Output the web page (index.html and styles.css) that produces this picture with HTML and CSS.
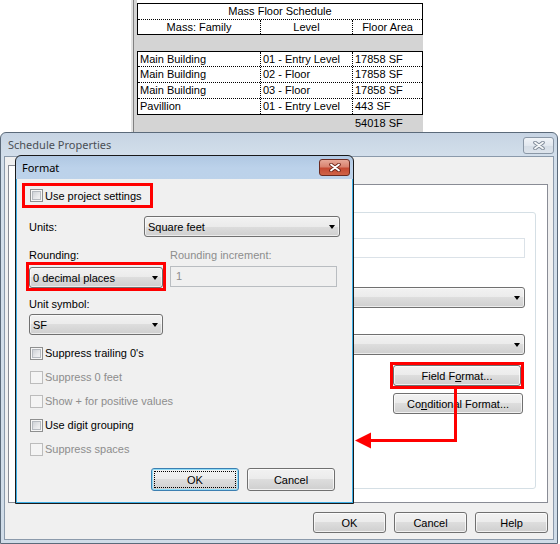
FILE: index.html
```html
<!DOCTYPE html>
<html lang="en">
<head>
    <meta charset="UTF-8">
    <title>Mass Floor Schedule</title>
    <link rel="stylesheet" href="styles.css">
</head>
<body>
    <!-- schedule view behind the dialogs -->
    <div class="schedule-view">
        <div class="splitter"></div>
        <div class="sheet">
            <div class="sched-head">
                <div class="sched-title">Mass Floor Schedule</div>
                <div class="sched-row head-row">
                    <div class="cell center">Mass: Family</div>
                    <div class="cell center">Level</div>
                    <div class="cell center">Floor Area</div>
                </div>
            </div>
            <div class="sched-gap"></div>
            <div class="sched-body">
                <div class="sched-row">
                    <div class="cell">Main Building</div>
                    <div class="cell">01 - Entry Level</div>
                    <div class="cell">17858 SF</div>
                </div>
                <div class="sched-row">
                    <div class="cell">Main Building</div>
                    <div class="cell">02 - Floor</div>
                    <div class="cell">17858 SF</div>
                </div>
                <div class="sched-row">
                    <div class="cell">Main Building</div>
                    <div class="cell">03 - Floor</div>
                    <div class="cell">17858 SF</div>
                </div>
                <div class="sched-row">
                    <div class="cell">Pavillion</div>
                    <div class="cell">01 - Entry Level</div>
                    <div class="cell">443 SF</div>
                </div>
            </div>
            <div class="sched-total">
                <div class="cell"></div>
                <div class="cell"></div>
                <div class="cell">54018 SF</div>
            </div>
        </div>
    </div>

    <!-- Schedule Properties window -->
    <div class="window props">
        <div class="titlebar">
            <span class="title">Schedule Properties</span>
            <span class="close-btn">
                <svg width="12" height="9" viewBox="0 0 12 9"><path d="M2 1.5 10 7.5M10 1.5 2 7.5" stroke="#7d8896" stroke-width="3.6" stroke-linecap="round"/><path d="M2 1.5 10 7.5M10 1.5 2 7.5" stroke="#f4f6f8" stroke-width="1.8" stroke-linecap="round"/></svg>
            </span>
        </div>
        <div class="client">
            <div class="tabs">
                <div class="tab"></div>
            </div>
            <div class="tab-panel">
                <div class="group">
                    <div class="textbox"></div>
                    <div class="combo wide"><span class="drop"></span></div>
                    <div class="combo wide second"><span class="drop"></span></div>
                    <div class="btn-col">
                        <div class="mark field-mark"><div class="btn field-btn">Field F<u>o</u>rmat...</div></div>
                        <div class="btn cond-btn">Co<u>n</u>ditional Format...</div>
                    </div>
                </div>
            </div>
            <div class="footer">
                <div class="btn foot-btn">OK</div>
                <div class="btn foot-btn">Cancel</div>
                <div class="btn foot-btn">Help</div>
            </div>
        </div>
    </div>

    <!-- Format dialog on top -->
    <div class="window format">
        <div class="titlebar">
            <span class="title">Format</span>
            <span class="close-btn active">
                <svg width="12" height="9" viewBox="0 0 12 9"><path d="M2 1.5 10 7.5M10 1.5 2 7.5" stroke="#6e2418" stroke-width="3.6" stroke-linecap="round"/><path d="M2 1.5 10 7.5M10 1.5 2 7.5" stroke="#ffffff" stroke-width="1.8" stroke-linecap="round"/></svg>
            </span>
        </div>
        <div class="client">
            <div class="mark project-mark">
                <span class="check"></span>
                <span class="label">Use project settings</span>
            </div>

            <div class="units-row">
                <span class="units-label">Units:</span>
                <div class="combo units-combo">Square feet<span class="drop"></span></div>
            </div>

            <div class="labels-row">
                <span class="round-label">Rounding:</span>
                <span class="disabled">Rounding increment:</span>
            </div>

            <div class="rounding-row">
                <div class="mark rounding-mark">
                    <div class="combo short-combo">0 decimal places<span class="drop"></span></div>
                </div>
                <div class="increment">1</div>
            </div>

            <div class="symbol-label">Unit symbol:</div>
            <div class="combo short-combo symbol-combo">SF<span class="drop"></span></div>

            <div class="checks">
                <div class="check-row"><span class="check"></span><span class="label">Suppress trailing 0's</span></div>
                <div class="check-row off"><span class="check"></span><span class="label">Suppress 0 feet</span></div>
                <div class="check-row off"><span class="check"></span><span class="label">Show + for positive values</span></div>
                <div class="check-row"><span class="check"></span><span class="label">Use digit grouping</span></div>
                <div class="check-row off"><span class="check"></span><span class="label">Suppress spaces</span></div>
            </div>

            <div class="dialog-buttons">
                <div class="btn dlg-btn default"><span class="focus">OK</span></div>
                <div class="btn dlg-btn">Cancel</div>
            </div>
        </div>
    </div>

    <!-- red callout from Field Format to the dialog -->
    <svg class="pointer" width="110" height="70" viewBox="0 0 110 70">
        <polyline points="105.5,3 105.5,55.5 18,55.5" fill="none" stroke="#ff0000" stroke-width="3"/>
        <polygon points="5,55.5 21,47.5 21,63.5" fill="#ff0000"/>
    </svg>
</body>
</html>
```

FILE: styles.css
```css
body {
    margin: 0;
    width: 560px;
    height: 544px;
    overflow: hidden;
    background: #ffffff;
    font-family: 'Liberation Sans', Arial, sans-serif;
    font-size: 11px;
    color: #000000;
    position: relative;
}

/* ---- schedule view ---- */

.schedule-view {
    display: flex;
    height: 132px;
}

.splitter {
    margin-left: 131px;
    width: 2px;
    background: #e2e2e2;
    border-right: 1px solid #808080;
}

.sheet {
    width: 286px;
    border-left: 3px solid #d4d4d4;
    padding-top: 3px;
}

.sched-head,
.sched-body {
    border: 1px solid #000000;
}

.sched-title {
    height: 15px;
    line-height: 15px;
    text-align: center;
    border-bottom: 1px dotted #000000;
}

.sched-row {
    display: grid;
    grid-template-columns: 123px 92px 69px;
    height: 15px;
    line-height: 15px;
}

.sched-body .sched-row {
    border-bottom: 1px dotted #000000;
}

.sched-body .sched-row:first-child {
    height: 14px;
    line-height: 14px;
}

.sched-body .sched-row:last-child {
    border-bottom: none;
}

.head-row {
    height: 14px;
    line-height: 14px;
}

.cell {
    padding-left: 2px;
    border-right: 1px dotted #000000;
    white-space: nowrap;
    overflow: hidden;
}

.cell:last-child {
    border-right: none;
}

.cell.center {
    text-align: center;
    padding-left: 0;
}

.sched-gap {
    height: 16px;
    background: #d4d4d4;
}

.sched-total {
    display: grid;
    grid-template-columns: 123px 92px 71px;
    height: 17px;
    line-height: 17px;
    background: #d4d4d4;
}

.sched-total .cell {
    border-right: none;
    padding-left: 3px;
}

/* ---- window chrome ---- */

.window {
    box-sizing: border-box;
    display: flex;
    flex-direction: column;
    border-radius: 6px 6px 0 0;
}

.titlebar {
    height: 23px;
    display: flex;
    justify-content: space-between;
    align-items: flex-start;
    font-family: 'Noto Sans', sans-serif;
    font-size: 11px;
}

.title {
    line-height: 23px;
}

.close-btn {
    box-sizing: border-box;
    width: 31px;
    height: 17px;
    border: 1px solid #8a97a6;
    border-radius: 3px;
    background: linear-gradient(#f1f4f8, #e2e8ef 50%, #d5dde6 51%, #dde4ec);
    display: flex;
    align-items: center;
    justify-content: center;
}

.close-btn.active {
    border-color: #6b2a20;
    background: linear-gradient(#e7a898, #d98370 45%, #c54a33 55%, #cf6448);
}

.client {
    background: #f0f0f0;
    display: flex;
    flex-direction: column;
}

/* ---- Schedule Properties ---- */

.props {
    width: 558px;
    height: 412px;
    border: 1px solid #5b6a7a;
    background: linear-gradient(#c7d4e3, #d3dfeb 24px, #d0dce8);
    padding: 0 3px 3px;
}

.props .titlebar {
    padding-left: 4px;
}

.props .title {
    color: #4a4f55;
}

.props .close-btn {
    margin-top: 4px;
}

.props .client {
    flex: 1;
    border: 1px solid #8b9aab;
    padding: 6px 5px 6px 3px;
}

.tabs {
    height: 21px;
    display: flex;
    align-items: flex-end;
}

.tab {
    width: 70px;
    height: 19px;
    background: #ffffff;
    border: 1px solid #898c95;
    border-bottom: none;
    margin-bottom: -1px;
    position: relative;
}

.tab-panel {
    box-sizing: border-box;
    height: 319px;
    background: #ffffff;
    border: 1px solid #898c95;
}

.group {
    box-sizing: border-box;
    height: 277px;
    margin: 27px 11px 0 200px;
    border: 1px solid #d5dfe5;
    border-radius: 3px;
    padding: 0 10px 0 20px;
    display: flex;
    flex-direction: column;
}

.textbox {
    box-sizing: border-box;
    height: 20px;
    margin-top: 25px;
    border: 1px solid #dbe2e8;
    background: #ffffff;
}

.combo {
    box-sizing: border-box;
    height: 21px;
    border: 1px solid #707070;
    border-radius: 3px;
    background: linear-gradient(#f2f2f2, #ebebeb 50%, #dddddd 50%, #cfcfcf);
    box-shadow: inset 0 0 0 1px rgba(255, 255, 255, 0.6);
    display: flex;
    align-items: center;
    padding-left: 3px;
    position: relative;
    white-space: nowrap;
}

.drop {
    margin-left: auto;
    margin-right: 4px;
    width: 0;
    height: 0;
    border-left: 3.5px solid transparent;
    border-right: 3.5px solid transparent;
    border-top: 4px solid #000000;
}

.combo.wide {
    margin-top: 29px;
}

.combo.wide.second {
    margin-top: 26px;
}

.btn-col {
    margin-top: 7px;
    display: flex;
    flex-direction: column;
    align-items: flex-end;
}

.mark {
    box-sizing: border-box;
    border: 3px solid #ff0000;
}

.field-mark {
    margin-right: 1px;
}

.btn {
    box-sizing: border-box;
    height: 21px;
    border: 1px solid #707070;
    border-radius: 3px;
    background: linear-gradient(#f2f2f2, #ebebeb 50%, #dddddd 50%, #cfcfcf);
    box-shadow: inset 0 0 0 1px rgba(255, 255, 255, 0.7);
    display: flex;
    align-items: center;
    justify-content: center;
    white-space: nowrap;
}

.btn u {
    text-underline-offset: 1px;
}

.field-btn {
    width: 128px;
    height: 21px;
}

.cond-btn {
    width: 130px;
    margin-top: 4px;
    margin-right: 2px;
}

.footer {
    margin-top: 9px;
    display: flex;
    justify-content: flex-end;
    gap: 8px;
    padding-right: 0;
}

.foot-btn {
    width: 73px;
}

/* ---- Format dialog ---- */

.format {
    position: absolute;
    left: 15px;
    top: 155px;
    width: 339px;
    height: 349px;
    border: 1px solid #1a1a1a;
    background: linear-gradient(#b0c8e3, #bcd2ea 12px, #c3d7ec);
}

.format .titlebar {
    padding-left: 6px;
}

.format .close-btn {
    margin-top: 3px;
    margin-right: 3px;
}

.format .client {
    flex: 1;
    border: 1px solid #3daee6;
    border-top: none;
    padding-left: 12px;
}

.project-mark {
    margin: 4px 0 0 -7px;
    width: 131px;
    height: 25px;
    display: flex;
    align-items: center;
    padding-left: 5px;
}

.check {
    box-sizing: border-box;
    flex: none;
    width: 13px;
    height: 13px;
    border: 1px solid #8e8f8f;
    background: linear-gradient(135deg, #c3c7cd, #e9eaec 60%, #f6f6f6);
    box-shadow: inset 0 0 0 1px #f6f6f6, inset 0 0 0 2px #b6bac0;
}

.label {
    margin-left: 2px;
    white-space: nowrap;
}

.units-row {
    margin-top: 8px;
    height: 21px;
    display: flex;
    align-items: center;
}

.units-label {
    width: 115px;
}

.units-combo {
    width: 196px;
}

.labels-row {
    margin-top: 12px;
    height: 13px;
    line-height: 13px;
    display: flex;
}

.round-label {
    width: 141px;
}

.disabled {
    color: #8d8d8d;
}

.rounding-row {
    display: flex;
    align-items: flex-start;
}

.rounding-mark {
    margin-left: -3px;
    width: 140px;
    height: 29px;
    padding-top: 2px;
}

.short-combo {
    width: 134px;
}

.increment {
    box-sizing: border-box;
    margin: 4px 0 0 4px;
    width: 167px;
    height: 21px;
    border: 1px solid #b9bdc1;
    padding-left: 5px;
    line-height: 19px;
    color: #8d8d8d;
}

.symbol-label {
    margin-top: 7px;
    height: 13px;
    line-height: 13px;
}

.symbol-combo {
    margin-top: 3px;
}

.checks {
    margin-top: 6px;
}

.check-row {
    height: 24px;
    display: flex;
    align-items: center;
    padding-left: 1px;
}

.check-row.off .check {
    border-color: #bcbcbc;
    background: #f4f4f4;
    box-shadow: none;
}

.check-row.off .label {
    color: #8d8d8d;
}

.dialog-buttons {
    margin-top: 7px;
    display: flex;
    justify-content: flex-end;
    gap: 8px;
    padding-right: 17px;
}

.dlg-btn {
    width: 88px;
    height: 23px;
}

.dlg-btn.default {
    border-color: #3c7fb1;
    box-shadow: inset 0 0 0 1px #8fdcf7;
    padding: 2px;
}

.focus {
    flex: 1;
    align-self: stretch;
    display: flex;
    align-items: center;
    justify-content: center;
    border: 1px dotted #000000;
}

.pointer {
    position: absolute;
    left: 350px;
    top: 385px;
}
```
